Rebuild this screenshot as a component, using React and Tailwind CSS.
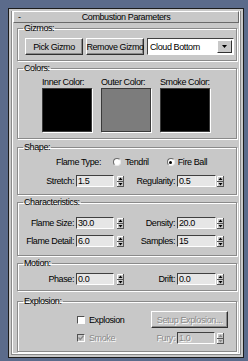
import React from 'react';

const font = { fontFamily: '"Liberation Sans", Arial, sans-serif', letterSpacing: '-0.4px' };

function Spinner({ disabled }) {
  const c = disabled ? '#8a8a8a' : '#000';
  return (
    <svg width="7" height="11" viewBox="0 0 7 11" className="shrink-0">
      <rect x="0" y="0" width="7" height="11" fill="#c8c8c8" />
      <path d="M0 0H7M0 0V11" stroke="#fff" strokeWidth="1" transform="translate(0.5 0.5)" />
      <path d="M6.5 0V11M0 10.5H7M0 5.5H7" stroke="#555" strokeWidth="1" />
      <path d="M3.5 1.5L5.5 4H1.5Z" fill={c} />
      <path d="M1.5 7H5.5L3.5 9.5Z" fill={c} />
    </svg>
  );
}

function Field({ value, disabled }) {
  return (
    <div
      className={`h-[12px] border border-t-[#404040] border-l-[#404040] border-b-white border-r-white pl-[1px] text-[9px] leading-[10px] ${
        disabled ? 'bg-[#c8c8c8] text-[#8a8a8a] [text-shadow:1px_1px_0_#fff]' : 'bg-[#e6e6e6] text-black'
      } w-full`}
    >
      {value}
    </div>
  );
}

function Num({ label, value, labelW, inputW, gap, disabled }) {
  return (
    <div className="flex items-center">
      <div
        className={`text-right pr-[2px] whitespace-nowrap ${disabled ? 'text-[#8a8a8a] [text-shadow:1px_1px_0_#fff]' : ''}`}
        style={{ width: labelW }}
      >
        {label}
      </div>
      <div style={{ width: inputW }}>
        <Field value={value} disabled={disabled} />
      </div>
      <div style={{ marginLeft: gap }}>
        <Spinner disabled={disabled} />
      </div>
    </div>
  );
}

function Row({ left, right }) {
  return (
    <div className="flex h-[12px] items-center">
      <Num {...left} labelW={58} inputW={38} gap={3} />
      <Num {...right} labelW={53} inputW={39} gap={1} />
    </div>
  );
}

function Btn({ children, className = '', disabled }) {
  return (
    <div
      className={`flex items-center justify-center whitespace-nowrap h-[17px] bg-[#c8c8c8] border border-t-white border-l-white border-b-[#303030] border-r-[#303030] shadow-[inset_-1px_-1px_0_#8a8a8a] ${
        disabled ? 'text-[#8a8a8a] [text-shadow:1px_1px_0_#fff]' : 'text-black'
      } ${className}`}
    >
      {children}
    </div>
  );
}

function Group({ title, className = '', children }) {
  return (
    <fieldset
      className={`border border-[#8a8a8a] shadow-[inset_1px_1px_0_#fff,1px_1px_0_#fff] ${className}`}
    >
      <legend className="ml-[5px] px-[1px] h-[10px] leading-[10px]">{title}</legend>
      {children}
    </fieldset>
  );
}

function Radio({ on }) {
  return (
    <div className="w-[8px] h-[8px] rounded-full bg-white border border-t-[#6a6a6a] border-l-[#6a6a6a] border-b-[#e8e8e8] border-r-[#e8e8e8] flex items-center justify-center">
      {on && <div className="w-[3px] h-[3px] rounded-full bg-black" />}
    </div>
  );
}

function Check({ on, disabled }) {
  return (
    <div
      className={`w-[8px] h-[8px] border border-t-[#505050] border-l-[#505050] border-b-white border-r-white ${
        disabled ? 'bg-[#c8c8c8]' : 'bg-white'
      }`}
    >
      {on && (
        <svg width="6" height="6" viewBox="0 0 6 6">
          <path d="M0.5 2.5L2.3 4.5L5.5 0.8" stroke={disabled ? '#8a8a8a' : '#000'} strokeWidth="1.3" fill="none" />
        </svg>
      )}
    </div>
  );
}

export default function App() {
  const dis = 'text-[#8a8a8a] [text-shadow:1px_1px_0_#fff]';
  return (
    <div className="w-[248px] h-[361px] bg-[#5b6b8b] pl-[8px] pt-[8px] text-[9px] leading-[10px] text-black" style={font}>
      <div className="w-[236px] h-[350px] border border-[#1c1c1c] bg-[#c8c8c8] px-[2px] pt-[2px]">
        <div className="h-[344px] border border-t-0 border-[#8a8a8a] shadow-[inset_1px_0_0_#fff,inset_-1px_-1px_0_#fff] pl-[5px] pr-[3px]">
          <div className="relative -ml-[4px] -mr-[2px] h-[12px] flex items-center justify-center bg-[#c8c8c8] border border-t-white border-l-white border-b-[#6a6a6a] border-r-[#6a6a6a]">
            <span className="absolute left-[4px]">-</span>
            <span>Combustion Parameters</span>
          </div>

          <Group title="Gizmos:" className="h-[38px]">
            <div className="flex pl-[7px] pt-[5px]">
              <Btn className="w-[58px]">Pick Gizmo</Btn>
              <Btn className="w-[58px] ml-[3px]">Remove Gizmo</Btn>
              <div className="w-[87px] ml-[3px] h-[17px] bg-white border border-t-[#404040] border-l-[#404040] border-b-white border-r-white flex items-center pl-[2px]">
                <span className="flex-1 whitespace-nowrap">Cloud Bottom</span>
                <div className="w-[15px] h-[13px] mr-[1px] bg-[#c8c8c8] border border-t-white border-l-white border-b-[#303030] border-r-[#303030] flex items-center justify-center">
                  <svg width="5" height="3" viewBox="0 0 5 3">
                    <path d="M0 0H5L2.5 3Z" fill="#000" />
                  </svg>
                </div>
              </div>
            </div>
          </Group>

          <Group title="Colors:" className="h-[76px] mt-[2px]">
            <div className="flex pl-[24px] pt-[4px] gap-[9px]">
              {[
                ['Inner Color:', 'bg-black'],
                ['Outer Color:', 'bg-[#7c7c7c]'],
                ['Smoke Color:', 'bg-black'],
              ].map(([t, c]) => (
                <div key={t} className="w-[50px]">
                  <div className="h-[11px] whitespace-nowrap">{t}</div>
                  <div className={`h-[44px] border border-[#3a3a3a] shadow-[1px_1px_0_#fff] ${c}`} />
                </div>
              ))}
            </div>
          </Group>

          <Group title="Shape:" className="h-[53px] mt-[3px]">
            <div className="flex h-[12px] items-center mt-[4px]">
              <div className="w-[83px] text-right">Flame Type:</div>
              <div className="ml-[12px]"><Radio /></div>
              <span className="ml-[4px]">Tendril</span>
              <div className="ml-[18px]"><Radio on /></div>
              <span className="ml-[3px]">Fire Ball</span>
            </div>
            <div className="mt-[7px]">
              <Row left={{ label: 'Stretch:', value: '1.5' }} right={{ label: 'Regularity:', value: '0.5' }} />
            </div>
          </Group>

          <Group title="Characteristics:" className="h-[59px] mt-[2px]">
            <div className="mt-[10px] flex flex-col gap-[6px]">
              <Row left={{ label: 'Flame Size:', value: '30.0' }} right={{ label: 'Density:', value: '20.0' }} />
              <Row left={{ label: 'Flame Detail:', value: '6.0' }} right={{ label: 'Samples:', value: '15' }} />
            </div>
          </Group>

          <Group title="Motion:" className="h-[33px] mt-[2px]">
            <div className="mt-[5px]">
              <Row left={{ label: 'Phase:', value: '0.0' }} right={{ label: 'Drift:', value: '0.0' }} />
            </div>
          </Group>

          <Group title="Explosion:" className="h-[56px] mt-[5px]">
            <div className="flex items-center mt-[5px]">
              <div className="w-[133px] flex items-center pl-[59px]">
                <Check />
                <span className="ml-[4px]">Explosion</span>
              </div>
              <Btn disabled className="w-[77px] h-[16px]">Setup Explosion...</Btn>
            </div>
            <div className="flex items-center mt-[4px] h-[12px]">
              <div className="w-[106px] flex items-center pl-[59px]">
                <Check on disabled />
                <span className={`ml-[4px] ${dis}`}>Smoke</span>
              </div>
              <Num label="Fury:" value="1.0" labelW={53} inputW={38} gap={2} disabled />
            </div>
          </Group>
        </div>
      </div>
    </div>
  );
}
